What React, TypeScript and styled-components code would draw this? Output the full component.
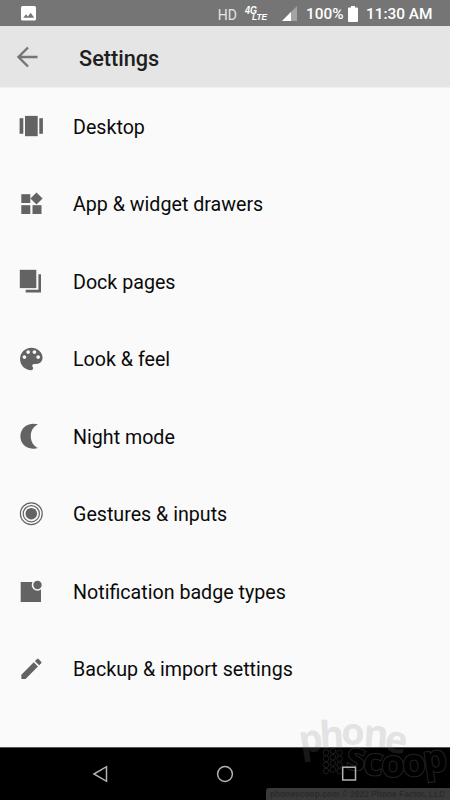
import React from "react";
import styled, { createGlobalStyle } from "styled-components";

const GlobalStyle = createGlobalStyle`
  * { box-sizing: border-box; }
  body { margin: 0; background: #fafafa; font-family: Roboto, "Noto Sans", sans-serif; }
`;

const Screen = styled.div`
  position: relative;
  display: flex;
  flex-direction: column;
  width: 450px;
  height: 800px;
  overflow: hidden;
  background: #fafafa;
`;

const StatusBar = styled.header`
  display: flex;
  align-items: center;
  flex: 0 0 26px;
  padding: 1px 17px 0 21px;
  background: #757575;
  color: #fff;
`;

const StatusSpacer = styled.div`
  flex: 1;
`;

const Hd = styled.span`
  font-size: 14px;
  line-height: 18px;
  color: #e4e4e4;
  margin: 3px 8px 0 0;
`;

const StatusText = styled.span<{ $width: number }>`
  width: ${(p) => p.$width}px;
  font-size: 15.4px;
  line-height: 20px;
  font-weight: 500;
  white-space: nowrap;
  margin-top: 1px;
`;

const StatusIcon = styled.svg<{ $gap?: number }>`
  display: block;
  flex: none;
  margin-right: ${(p) => p.$gap ?? 0}px;
  overflow: visible;
`;

const AppBar = styled.div`
  display: flex;
  align-items: center;
  flex: 0 0 62px;
  padding-left: 16px;
  background: #e5e5e5;
  border-bottom: 1px solid #f0f0f0;
`;

const BackButton = styled.button`
  display: flex;
  width: 24px;
  height: 24px;
  margin: 0 39px 0 0;
  padding: 0;
  border: 0;
  background: none;
`;

const Title = styled.h1`
  margin: 4px 0 0;
  font-size: 21.7px;
  line-height: 28px;
  font-weight: 500;
  color: #1f1f1f;
`;

const List = styled.ul`
  flex: 1;
  margin: 0;
  padding: 0;
  list-style: none;
`;

const Row = styled.li`
  display: flex;
  align-items: center;
  height: 77.5px;
  padding-left: 16px;
`;

const RowIcon = styled.svg`
  flex: none;
  width: 30px;
  height: 30px;
  margin: 1px 27px 0 0;
  fill: #636363;
`;

const Label = styled.span`
  padding-top: 2px;
  font-size: 19.65px;
  line-height: 24px;
  color: #0a0a0a;
  white-space: nowrap;
`;

const NavBar = styled.nav`
  display: flex;
  justify-content: space-between;
  flex: 0 0 53px;
  padding: 17px 92px 0;
  background: #000;
  border-top: 1px solid #555;
`;

const NavIcon = styled.svg`
  z-index: 1;
  width: 18px;
  height: 18px;
  fill: none;
  stroke: #b2b2b2;
  stroke-width: 1.5;
`;

const Watermark = styled.svg`
  position: absolute;
  right: 0;
  bottom: 12px;
  width: 155px;
  height: 78px;
  overflow: visible;
  font-family: "Open Sans", sans-serif;
  font-weight: 700;
  text-anchor: middle;
  pointer-events: none;
`;

const Copyright = styled.div`
  position: absolute;
  right: 0;
  bottom: 0;
  width: 184px;
  height: 12px;
  padding-left: 4px;
  border-top-left-radius: 3px;
  background: #3a3a3a;
  color: #2b2b2b;
  font: bold 8.4px/12px "Liberation Sans", sans-serif;
  white-space: nowrap;
`;

const items: { label: string; icon: React.ReactNode }[] = [
  {
    label: "Desktop",
    icon: (
      <>
        <rect x="3.6" y="6.2" width="3.7" height="15.6" />
        <rect x="9" y="3.9" width="12.7" height="20.3" />
        <rect x="23.3" y="6.2" width="3.6" height="15.6" />
      </>
    ),
  },
  {
    label: "App & widget drawers",
    icon: (
      <>
        <rect x="5.3" y="4.2" width="9" height="8.8" />
        <rect x="5.3" y="15.2" width="9" height="8.8" />
        <rect x="16.5" y="15.2" width="9" height="8.8" />
        <path d="M20.5 2.4l6.1 6.1-6.1 6.1-6.1-6.1z" />
      </>
    ),
  },
  {
    label: "Dock pages",
    icon: (
      <>
        <rect x="3.8" y="2.8" width="16.5" height="18.3" />
        <path d="M22.4 7.2h2.6V25.4H9.7v-2.6h12.7z" />
      </>
    ),
  },
  {
    label: "Look & feel",
    icon: (
      <path
        transform="translate(0.3 -1.1) scale(1.25)"
        d="M12 3c-4.97 0-9 4.03-9 9s4.03 9 9 9c.83 0 1.5-.67 1.5-1.5 0-.39-.15-.74-.39-1.01-.23-.26-.38-.61-.38-.99 0-.83.67-1.5 1.5-1.5H16c2.76 0 5-2.24 5-5 0-4.42-4.03-8-9-8zm-5.5 9c-.83 0-1.5-.67-1.5-1.5S5.67 9 6.5 9 8 9.67 8 10.5 7.33 12 6.5 12zm3-4C8.67 8 8 7.33 8 6.5S8.67 5 9.5 5s1.5.67 1.5 1.5S10.33 8 9.5 8zm5 0c-.83 0-1.5-.67-1.5-1.5S13.67 5 14.5 5s1.5.67 1.5 1.5S15.33 8 14.5 8zm3 4c-.83 0-1.5-.67-1.5-1.5S16.67 9 17.5 9s1.5.67 1.5 1.5-.67 1.5-1.5 1.5z"
      />
    ),
  },
  {
    label: "Night mode",
    icon: <path d="M22 2.3Q17.5 1 13 2.4C7.5 4.1 4.4 8.8 4.4 14.2S7.5 24.3 13 26.1Q17.5 27.3 22 26.1C17.5 23.8 14.8 19.7 14.8 14.2S17.5 4.6 22 2.3z" />,
  },
  {
    label: "Gestures & inputs",
    icon: (
      <>
        <circle cx="15.3" cy="13.7" r="5.8" />
        <g fill="none" stroke="#636363">
          <circle cx="15.3" cy="13.7" r="8.1" strokeWidth="1.2" />
          <circle cx="15.3" cy="13.7" r="10.9" strokeWidth="1.2" />
        </g>
      </>
    ),
  },
  {
    label: "Notification badge types",
    icon: (
      <>
        <rect x="4.7" y="5" width="20.3" height="20" />
        <circle cx="21.5" cy="8" r="5" fill="#636363" stroke="#fafafa" strokeWidth="1.6" />
      </>
    ),
  },
  {
    label: "Backup & import settings",
    icon: (
      <path
        transform="translate(2 0.4) scale(1.12)"
        d="M3 17.25V21h3.75L17.81 9.94l-3.75-3.75L3 17.25zM20.71 7.04c.39-.39.39-1.02 0-1.41l-2.34-2.34c-.39-.39-1.02-.39-1.41 0l-1.83 1.83 3.75 3.75 1.83-1.83z"
      />
    ),
  },
];

// Each entry: letter, centre x, baseline y, tilt in degrees.
const phoneLetters: [string, number, number, number][] = [
  ["p", 16, 42, -9],
  ["h", 37, 38, -3],
  ["o", 58, 35, 0],
  ["n", 81, 37, 4],
  ["e", 101, 43, 9],
];

const scoopLetters: [string, number, number, number][] = [
  ["s", 61, 60, 8],
  ["c", 78, 65, 5],
  ["o", 98, 67, 0],
  ["o", 119, 66, -4],
  ["p", 140, 62, -8],
];

const dotRows = [0, 1, 2, 3];

export default function App() {
  return (
    <>
      <GlobalStyle />
      <Screen>
        <StatusBar>
          <StatusIcon width="15" height="15" viewBox="0 0 15 15">
            <rect width="15" height="14.5" rx="1.5" fill="#fff" />
            <path d="M2.3 11.8L5 8.2l1.9 2.2 2.8-3.7 3.5 5.1z" fill="#757575" />
          </StatusIcon>
          <StatusSpacer />
          <Hd>HD</Hd>
          <StatusIcon width="24" height="18" viewBox="0 0 24 18" $gap={13} fill="#fff">
            <g fontFamily="Liberation Sans" fontWeight="bold" fontStyle="italic">
              <text x="0" y="8.5" fontSize="10" textLength="12" lengthAdjust="spacingAndGlyphs">4G</text>
              <text x="7" y="15" fontSize="8.4" textLength="15">LTE</text>
            </g>
          </StatusIcon>
          <StatusIcon width="15" height="15" viewBox="0 0 15 15" $gap={9}>
            <path d="M15 0v15H0z" fill="#a3a3a3" />
            <path d="M9 6v9H0z" fill="#fff" />
          </StatusIcon>
          <StatusText $width={42}>100%</StatusText>
          <StatusIcon width="10" height="16" viewBox="0 0 10 16" $gap={8}>
            <path d="M3 0h4v1.5h2q1 0 1 1V15q0 1-1 1H1q-1 0-1-1V2.5q0-1 1-1h2z" fill="#fff" />
          </StatusIcon>
          <StatusText $width={67}>11:30 AM</StatusText>
        </StatusBar>
        <AppBar>
          <BackButton aria-label="Back">
            <svg width="24" height="24" viewBox="0 0 24 24" fill="none" stroke="#757575" strokeWidth="2.4">
              <path d="M21.5 12H3M12 2.5L2.5 12l9.5 9.5" />
            </svg>
          </BackButton>
          <Title>Settings</Title>
        </AppBar>
        <List>
          {items.map((item) => (
            <Row key={item.label}>
              <RowIcon viewBox="0 0 30 30">{item.icon}</RowIcon>
              <Label>{item.label}</Label>
            </Row>
          ))}
        </List>
        <NavBar>
          <NavIcon viewBox="0 0 18 18">
            <path d="M2 9l12.5-7.3v14.6z" />
          </NavIcon>
          <NavIcon viewBox="0 0 18 18">
            <circle cx="9" cy="9" r="7.4" />
          </NavIcon>
          <NavIcon viewBox="0 0 18 18">
            <rect x="2.7" y="2.2" width="12.8" height="12.8" />
          </NavIcon>
        </NavBar>
        <Watermark viewBox="0 0 155 78" aria-hidden="true">
          <g fontSize="38" fill="#808080" fillOpacity="0.2">
            {phoneLetters.map(([c, x, y, r]) => (
              <text key={c} x={x} y={y} transform={`rotate(${r} ${x} ${y - 10})`}>{c}</text>
            ))}
          </g>
          <g fill="none" stroke="#1e1e1e">
            {dotRows.map((row) => (
              <React.Fragment key={row}>
                <circle cx="31" cy={42.5 + row * 6.2} r="2.8" />
                <circle cx="37.8" cy={41 + row * 6.2} r="2.8" />
                <circle cx="44.6" cy={42.5 + row * 6.2} r="2.8" />
              </React.Fragment>
            ))}
          </g>
          <g fontSize="38" fill="#000" stroke="#222" strokeWidth="2" paintOrder="stroke">
            {scoopLetters.map(([c, x, y, r], i) => (
              <text key={i} x={x} y={y} transform={`rotate(${r} ${x} ${y - 10})`}>{c}</text>
            ))}
          </g>
        </Watermark>
        <Copyright>phonescoop.com © 2022 Phone Factor, LLC</Copyright>
      </Screen>
    </>
  );
}
